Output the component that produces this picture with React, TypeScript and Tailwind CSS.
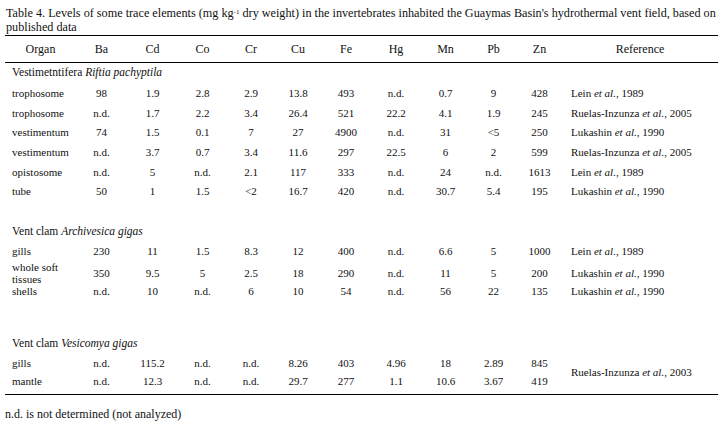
import React from "react";

type Row = { organ: string; vals: string[]; ref?: string };

const cols = "grid grid-cols-[71px_51px_51px_49px_48px_46px_50px_50px_49px_47px_45px_156px]";

const headers = ["Ba", "Cd", "Co", "Cr", "Cu", "Fe", "Hg", "Mn", "Pb", "Zn"];

const riftia: Row[] = [
  { organ: "trophosome", vals: ["98", "1.9", "2.8", "2.9", "13.8", "493", "n.d.", "0.7", "9", "428"], ref: "Lein|1989" },
  { organ: "trophosome", vals: ["n.d.", "1.7", "2.2", "3.4", "26.4", "521", "22.2", "4.1", "1.9", "245"], ref: "Ruelas-Inzunza|2005" },
  { organ: "vestimentum", vals: ["74", "1.5", "0.1", "7", "27", "4900", "n.d.", "31", "<5", "250"], ref: "Lukashin|1990" },
  { organ: "vestimentum", vals: ["n.d.", "3.7", "0.7", "3.4", "11.6", "297", "22.5", "6", "2", "599"], ref: "Ruelas-Inzunza|2005" },
  { organ: "opistosome", vals: ["n.d.", "5", "n.d.", "2.1", "117", "333", "n.d.", "24", "n.d.", "1613"], ref: "Lein|1989" },
  { organ: "tube", vals: ["50", "1", "1.5", "<2", "16.7", "420", "n.d.", "30.7", "5.4", "195"], ref: "Lukashin|1990" },
];

const archivesica: Row[] = [
  { organ: "gills", vals: ["230", "11", "1.5", "8.3", "12", "400", "n.d.", "6.6", "5", "1000"], ref: "Lein|1989" },
  { organ: "whole soft tissues", vals: ["350", "9.5", "5", "2.5", "18", "290", "n.d.", "11", "5", "200"], ref: "Lukashin|1990" },
  { organ: "shells", vals: ["n.d.", "10", "n.d.", "6", "10", "54", "n.d.", "56", "22", "135"], ref: "Lukashin|1990" },
];

const vesicomya: Row[] = [
  { organ: "gills", vals: ["n.d.", "115.2", "n.d.", "n.d.", "8.26", "403", "4.96", "18", "2.89", "845"] },
  { organ: "mantle", vals: ["n.d.", "12.3", "n.d.", "n.d.", "29.7", "277", "1.1", "10.6", "3.67", "419"] },
];

const Ref = ({ value }: { value: string }) => {
  const [name, year] = value.split("|");
  return (
    <span>
      {name} <i>et al.</i>, {year}
    </span>
  );
};

const DataRow = ({ row, h }: { row: Row; h: string }) => (
  <div className={`${cols} ${h} items-center leading-[12px]`}>
    <div className="pl-[7px] pr-[8px]">{row.organ}</div>
    {row.vals.map((v, i) => (
      <div key={i} className="text-center">
        {v}
      </div>
    ))}
    <div className="pl-[9px]">{row.ref && <Ref value={row.ref} />}</div>
  </div>
);

const SectionTitle = ({ children }: { children: React.ReactNode }) => (
  <div className="h-[20px] flex items-center pl-[7px] text-[11.5px]">{children}</div>
);

export default function App() {
  return (
    <div className="w-[727px] h-[425px] bg-white text-[#111] font-['Liberation_Serif',serif] text-[11px] overflow-hidden">
      <div className="pl-[6px] pr-[4px] pt-[6px] leading-[14px] text-[12.2px]">
        Table 4. Levels of some trace elements (mg kg<sup className="text-[7px] leading-none">-1</sup> dry weight) in
        the invertebrates inhabited the Guaymas Basin's hydrothermal vent field, based on published data
      </div>

      <div className="ml-[5px] w-[713px] mt-[1px]">
        <div className={`${cols} h-[28px] items-center border-t border-b border-black text-[12px]`}>
          <div className="text-center">Organ</div>
          {headers.map((h) => (
            <div key={h} className="text-center">
              {h}
            </div>
          ))}
          <div className="text-center">Reference</div>
        </div>

        <SectionTitle>
          Vestimetntifera&nbsp;<i>Riftia pachyptila</i>
        </SectionTitle>
        {riftia.map((r, i) => (
          <DataRow key={i} row={r} h="h-[19.7px]" />
        ))}

        <div className="h-[20px]" />
        <SectionTitle>
          Vent clam&nbsp;<i>Archivesica gigas</i>
        </SectionTitle>
        <DataRow row={archivesica[0]} h="h-[19.5px]" />
        <DataRow row={archivesica[1]} h="h-[20px]" />
        <DataRow row={archivesica[2]} h="h-[20px]" />

        <div className="h-[33px]" />
        <SectionTitle>
          Vent clam&nbsp;<i>Vesicomya gigas</i>
        </SectionTitle>
        <div className={`${cols} grid-rows-[18px_18px] items-center leading-[12px] pb-[4px] border-b border-black`}>
          {vesicomya.map((r, ri) => (
            <React.Fragment key={ri}>
              <div className="pl-[7px]">{r.organ}</div>
              {r.vals.map((v, i) => (
                <div key={i} className="text-center">
                  {v}
                </div>
              ))}
              {ri === 0 && (
                <div className="row-span-2 pl-[9px]">
                  <Ref value="Ruelas-Inzunza|2003" />
                </div>
              )}
            </React.Fragment>
          ))}
        </div>
      </div>

      <div className="pl-[5px] mt-[10px] text-[12px]">n.d. is not determined (not analyzed)</div>
    </div>
  );
}
